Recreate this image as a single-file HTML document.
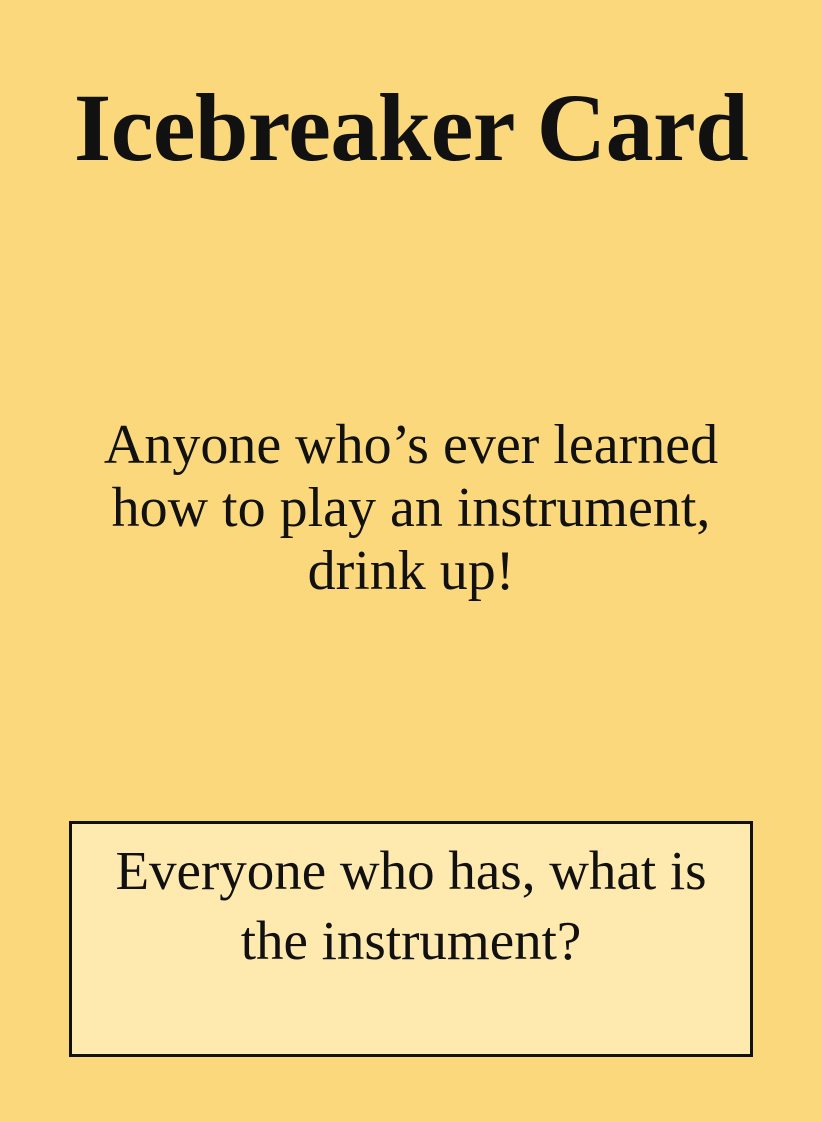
<!DOCTYPE html>
<html><head><style>
body{margin:0;width:822px;height:1122px;background:#fad87b;font-family:"Liberation Serif",serif;color:#111;position:relative;overflow:hidden}
h1{position:absolute;top:73px;left:0;width:822px;text-align:center;margin:0;font-size:96px;font-weight:bold;line-height:110px;letter-spacing:-0.5px}
.mid{position:absolute;top:414px;left:0;width:822px;text-align:center;font-size:56px;line-height:63px}
.box{position:absolute;left:69px;top:821px;width:678px;height:230px;border:3px solid #111;background:#fee9af;text-align:center;font-size:55px;line-height:70px;box-sizing:content-box}
.box div{padding-top:12px}
</style></head><body>
<h1>Icebreaker Card</h1>
<div class="mid">Anyone who’s ever learned<br>how to play an instrument,<br>drink up!</div>
<div class="box"><div>Everyone who has, what is<br>the instrument?</div></div>
</body></html>
